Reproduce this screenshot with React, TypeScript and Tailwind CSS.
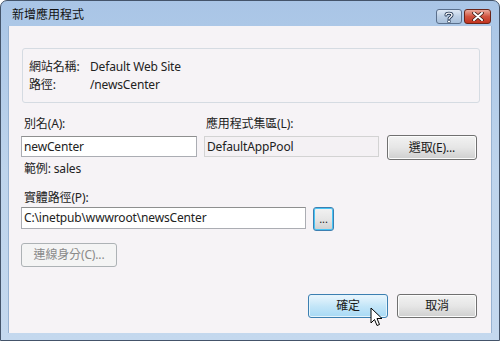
import React from 'react';

const font = { fontFamily: '"Noto Sans", "Noto Sans CJK TC", sans-serif' };

const btn =
  'h-[24px] rounded-[3px] border border-[#707070] bg-gradient-to-b from-[#f2f2f2] via-[#e6e6e6] to-[#cfcfcf] shadow-[inset_0_0_0_1px_#fcfcfc] flex items-center justify-center text-[12px] text-[#1a1a1a]';

export default function App() {
  return (
    <div className="w-[500px] h-[341px] bg-white" style={font}>
      <div className="relative w-[500px] h-[341px] rounded-t-[7px] border border-[#44546a] bg-gradient-to-b from-[#a9c5e6] via-[#bed4ec] to-[#c4d8ee] flex flex-col">
        {/* TITLE BAR */}
        <div className="h-[25px] shrink-0 flex items-start justify-between pl-[11px] pr-[8px]">
          <span className="mt-[6px] text-[12px] leading-[16px] text-[#111]">新增應用程式</span>
          <div className="flex gap-[2px] mt-[8px]">
            <div className="w-[26px] h-[15px] rounded-[3px] border border-[#5a6f8c] bg-gradient-to-b from-[#dfe9f5] via-[#bccfe5] to-[#a9c0db] flex items-center justify-center">
              <svg width="10" height="12" viewBox="0 0 10 12">
                <path
                  d="M2 4 C2 1.5 8 1.5 8 4 C8 6 5 6 5 8"
                  fill="none"
                  stroke="#1f3350"
                  strokeWidth="3"
                  strokeLinecap="round"
                />
                <path
                  d="M2 4 C2 1.5 8 1.5 8 4 C8 6 5 6 5 8"
                  fill="none"
                  stroke="#ffffff"
                  strokeWidth="1.4"
                  strokeLinecap="round"
                />
                <circle cx="5" cy="10.5" r="1.5" fill="#ffffff" stroke="#1f3350" strokeWidth="0.8" />
              </svg>
            </div>
            <div className="w-[27px] h-[15px] rounded-[3px] border border-[#6b2418] bg-gradient-to-b from-[#e9a99c] via-[#d1533f] to-[#c1321f] flex items-center justify-center">
              <svg width="14" height="9" viewBox="0 0 14 9">
                <path d="M3 1 L11 8 M11 1 L3 8" stroke="#3a1a14" strokeWidth="3.6" strokeLinecap="round" />
                <path d="M3 1 L11 8 M11 1 L3 8" stroke="#ffffff" strokeWidth="2" strokeLinecap="round" />
              </svg>
            </div>
          </div>
        </div>

        {/* CLIENT AREA */}
        <div className="mx-[7px] h-[307px] shrink-0 bg-[#f6f3f6] border-x border-[#98b3d2] flex flex-col text-[12px] text-[#222] tracking-[-0.15px]">
          {/* site info group */}
          <div className="ml-[13px] mt-[22px] w-[458px] h-[55px] rounded-[3px] border border-[#d5dbe2] pl-[6px] pt-[9px]">
            <div className="flex leading-[18px]">
              <span className="w-[61px]">網站名稱:</span>
              <span>Default Web Site</span>
            </div>
            <div className="flex leading-[18px]">
              <span className="w-[61px]">路徑:</span>
              <span>/newsCenter</span>
            </div>
          </div>

          {/* alias / pool labels */}
          <div className="flex pl-[12px] mt-[12px] leading-[18px]">
            <span className="w-[183px] pl-[3px]">別名(A):</span>
            <span className="pl-[2px]">應用程式集區(L):</span>
          </div>
          <div className="flex items-start pl-[12px] mt-[2px] h-[25px]">
            <div className="mt-[1px] w-[176px] h-[21px] border border-[#abadb3] border-t-[#8e8f8f] bg-white pl-[2px] leading-[19px]">
              newCenter
            </div>
            <div className="ml-[7px] mt-[1px] w-[175px] h-[21px] border border-[#d3d3d3] bg-[#f4f1f4] pl-[2px] leading-[19px]">
              DefaultAppPool
            </div>
            <div className={`${btn} ml-[8px] w-[90px] h-[25px]`}>選取(E)...</div>
          </div>
          <div className="pl-[15px] leading-[18px]">範例: sales</div>

          {/* physical path */}
          <div className="pl-[15px] mt-[11px] leading-[18px]">實體路徑(P):</div>
          <div className="flex items-start pl-[12px]">
            <div className="w-[285px] h-[22px] border border-[#abadb3] border-t-[#8e8f8f] bg-white pl-[2px] leading-[20px]">
              C:\inetpub\wwwroot\newsCenter
            </div>
            <div className="ml-[7px] w-[21px] h-[24px] rounded-[3px] border border-[#3c7fb1] bg-gradient-to-b from-[#f2f2f2] via-[#e6e6e6] to-[#cfcfcf] shadow-[inset_0_0_0_1px_#48c5f5] flex items-center justify-center text-[11px] leading-none pb-[2px]">
              ...
            </div>
          </div>

          <div className="pl-[12px] mt-[12px]">
            <div className="w-[96px] h-[24px] rounded-[3px] border border-[#adb2b5] bg-[#f4f4f4] flex items-center justify-center text-[#8a8a8a]">
              連線身分(C)...
            </div>
          </div>

          {/* OK / Cancel */}
          <div className="flex justify-end gap-[9px] pr-[14px] mt-[27px]">
            <div className="w-[80px] h-[24px] rounded-[3px] border border-[#3c7fb1] bg-gradient-to-b from-[#eaf6fd] via-[#c4e6f8] to-[#a7d9f5] shadow-[inset_0_0_0_1px_#e4f4fc] flex items-center justify-center text-[#1a1a1a]">
              確定
            </div>
            <div className={`${btn} w-[80px]`}>取消</div>
          </div>
        </div>

        {/* mouse cursor */}
        <svg className="absolute left-[369px] top-[306px]" width="14" height="21" viewBox="0 0 14 21">
          <path
            d="M1 1 L1 16 L4.5 12.5 L7 18.5 L9.5 17.5 L7 11.5 L12 11.5 Z"
            fill="#ffffff"
            stroke="#000000"
            strokeWidth="1"
            strokeLinejoin="miter"
          />
        </svg>
      </div>
    </div>
  );
}
